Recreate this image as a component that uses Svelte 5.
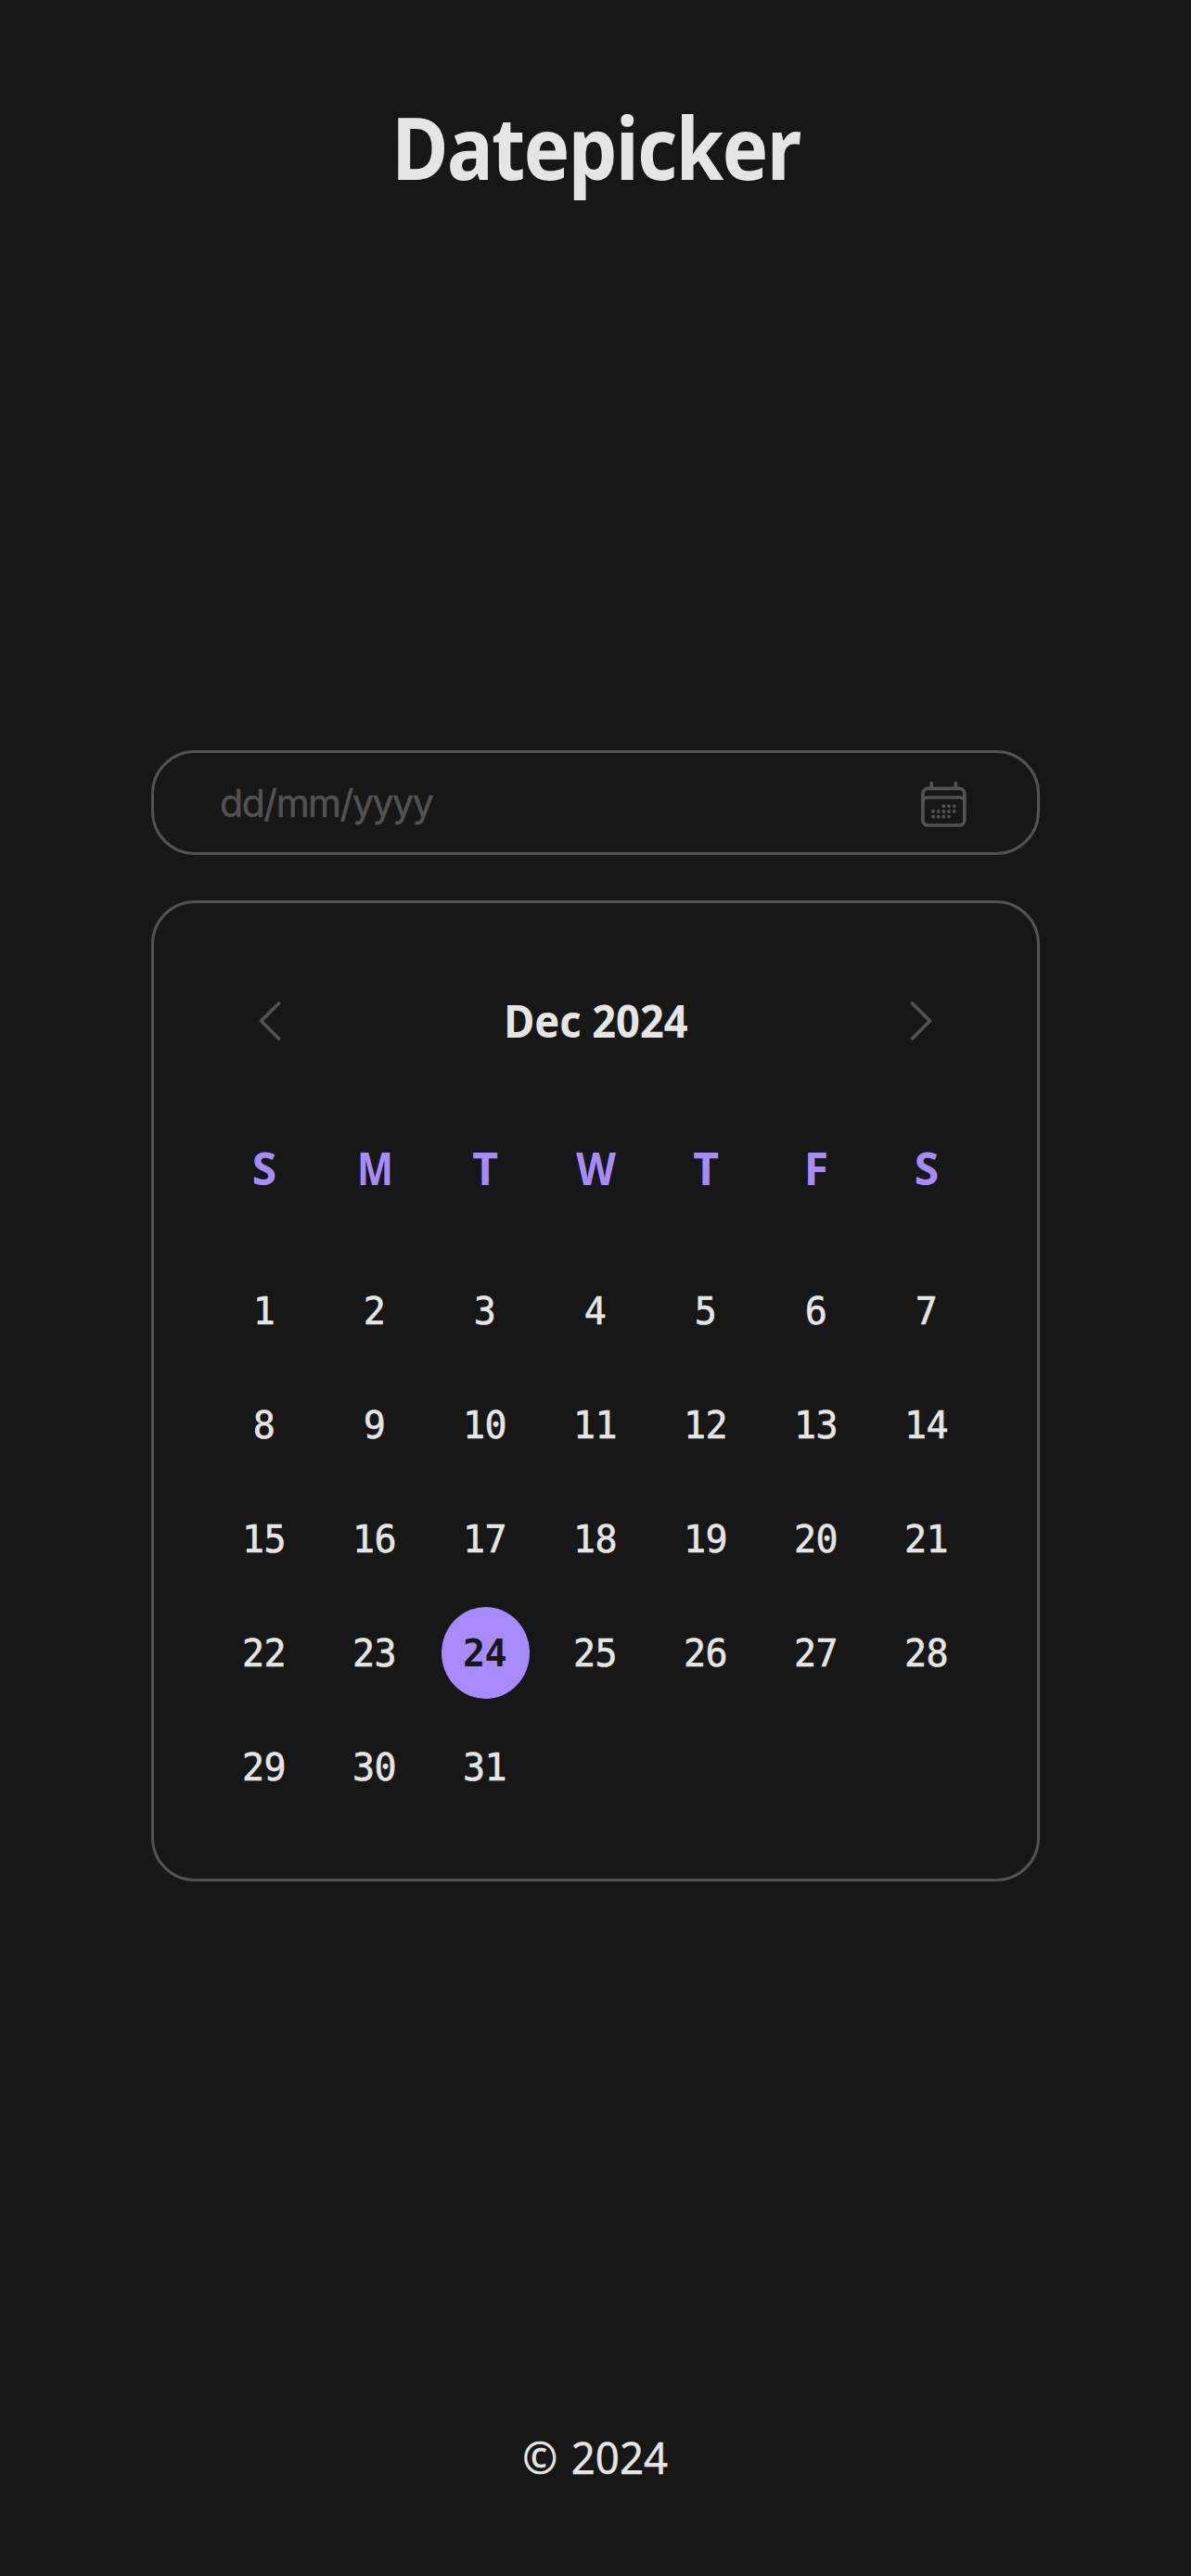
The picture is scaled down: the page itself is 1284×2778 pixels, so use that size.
<script>
  const weekdays = ['S', 'M', 'T', 'W', 'T', 'F', 'S'];
  const days = Array.from({ length: 31 }, (_, i) => i + 1);
  let selected = $state(24);

  // dot positions on the calendar glyph: [column, row]
  const dots = [
    [2, 0], [3, 0], [4, 0],
    [0, 1], [1, 1], [2, 1], [3, 1], [4, 1],
    [0, 2], [1, 2], [2, 2], [3, 2]
  ];
</script>

<div class="page">
  <header><h1>Datepicker</h1></header>

  <main>
    <label class="field">
      <input type="text" placeholder="dd/mm/yyyy" />
      <svg class="calendar-icon" viewBox="155 155 153 153" aria-hidden="true">
        <rect x="163.5" y="180" width="135" height="119" rx="17" />
        <path d="M163.5 223v-1q0-13 14-13h107q14 0 14 13v1M191.500 163v14M270 163v14" />
        {#each dots as [c, r]}
          <circle cx={197 + c * 17} cy={237 + r * 17} r="5.8" />
        {/each}
      </svg>
    </label>

    <section class="card">
      <div class="month">
        <button aria-label="Previous month">
          <svg viewBox="0 0 24 44"><path d="M21.500 3L2.500 22L21.500 41" /></svg>
        </button>
        <h2>Dec 2024</h2>
        <button aria-label="Next month">
          <svg viewBox="0 0 24 44"><path d="M2.500 3L21.500 22L2.500 41" /></svg>
        </button>
      </div>

      <div class="weekdays">
        {#each weekdays as name}<span>{name}</span>{/each}
      </div>

      <div class="days">
        {#each days as day}
          <button class="day" class:selected={day === selected} onclick={() => (selected = day)}>{day}</button>
        {/each}
      </div>
    </section>
  </main>

  <footer><span>© 2024</span></footer>
</div>

<style>
  :global(body) {
    margin: 0;
    background: #171717;
  }

  .page {
    box-sizing: border-box;
    display: flex;
    flex-direction: column;
    align-items: center;
    height: 2778px;
    overflow: hidden;
    background: #171717;
    color: #e5e5e5;
    font-family: 'Noto Sans', 'Open Sans', sans-serif;
  }

  header {
    height: 809px;
    padding-top: 92px;
    box-sizing: border-box;
  }

  h1 {
    margin: 0;
    font-size: 94px;
    line-height: 132px;
    font-weight: 700;
    letter-spacing: -2px;
    transform: scaleX(0.89);
  }

  main {
    width: 958px;
  }

  .field {
    box-sizing: border-box;
    display: flex;
    align-items: center;
    justify-content: space-between;
    height: 113px;
    padding: 0 75px 0 71px;
    border: 3px solid #525252;
    border-radius: 47px;
  }

  input {
    width: 400px;
    padding: 1px 0 0;
    border: 0;
    outline: 0;
    background: transparent;
    color: #e5e5e5;
    font: 400 41px/54px Inter, sans-serif;
    letter-spacing: -1.45px;
  }

  input::placeholder {
    color: #525252;
    opacity: 1;
    -webkit-text-stroke: 0.5px #525252;
  }

  svg {
    display: block;
    fill: none;
    stroke: #525252;
    stroke-linecap: round;
    stroke-linejoin: round;
  }

  .calendar-icon {
    width: 51px;
    height: 51px;
    margin-top: 3px;
    stroke-width: 11;
  }

  .calendar-icon circle {
    fill: #525252;
    stroke: none;
  }

  .card {
    box-sizing: border-box;
    display: flex;
    flex-direction: column;
    align-items: center;
    height: 1058px;
    margin-top: 49px;
    padding-top: 92px;
    border: 3px solid #525252;
    border-radius: 47px;
  }

  button {
    margin: 0;
    padding: 0;
    border: 0;
    background: none;
    color: inherit;
  }

  .month {
    display: flex;
    align-items: center;
    justify-content: space-between;
    width: 726px;
    height: 70px;
  }

  .month svg {
    width: 24px;
    height: 44px;
    stroke-width: 3.7;
  }

  h2 {
    margin: 0;
    font-size: 48px;
    line-height: 66px;
    font-weight: 700;
    transform: scaleX(0.94);
  }

  .weekdays,
  .days {
    display: grid;
    grid-template-columns: repeat(7, 95px);
    gap: 24px;
  }

  .weekdays {
    margin-top: 91px;
    color: #a78bfa;
    font-size: 48px;
    line-height: 66px;
    font-weight: 700;
    text-align: center;
  }

  .weekdays span:nth-child(2) {
    transform: scaleX(0.86);
  }

  .weekdays span:nth-child(4) {
    transform: scaleX(0.92);
  }

  .days {
    margin-top: 71px;
  }

  .day {
    height: 99px;
    padding: 1px 1px 0 0;
    border-radius: 50%;
    font: 400 40px/98px 'DejaVu Sans Mono', monospace;
    letter-spacing: -0.5px;
    text-align: center;
    -webkit-text-stroke: 0.6px currentColor;
  }

  .day.selected {
    background: #a78bfa;
    color: #171717;
    font-weight: 700;
    -webkit-text-stroke: 0;
  }

  footer {
    margin-top: 588px;
    font-size: 48px;
    line-height: 66px;
  }

  footer span {
    display: block;
    word-spacing: 3px;
    transform: scaleX(0.95);
    -webkit-text-stroke: 0.4px currentColor;
  }
</style>
